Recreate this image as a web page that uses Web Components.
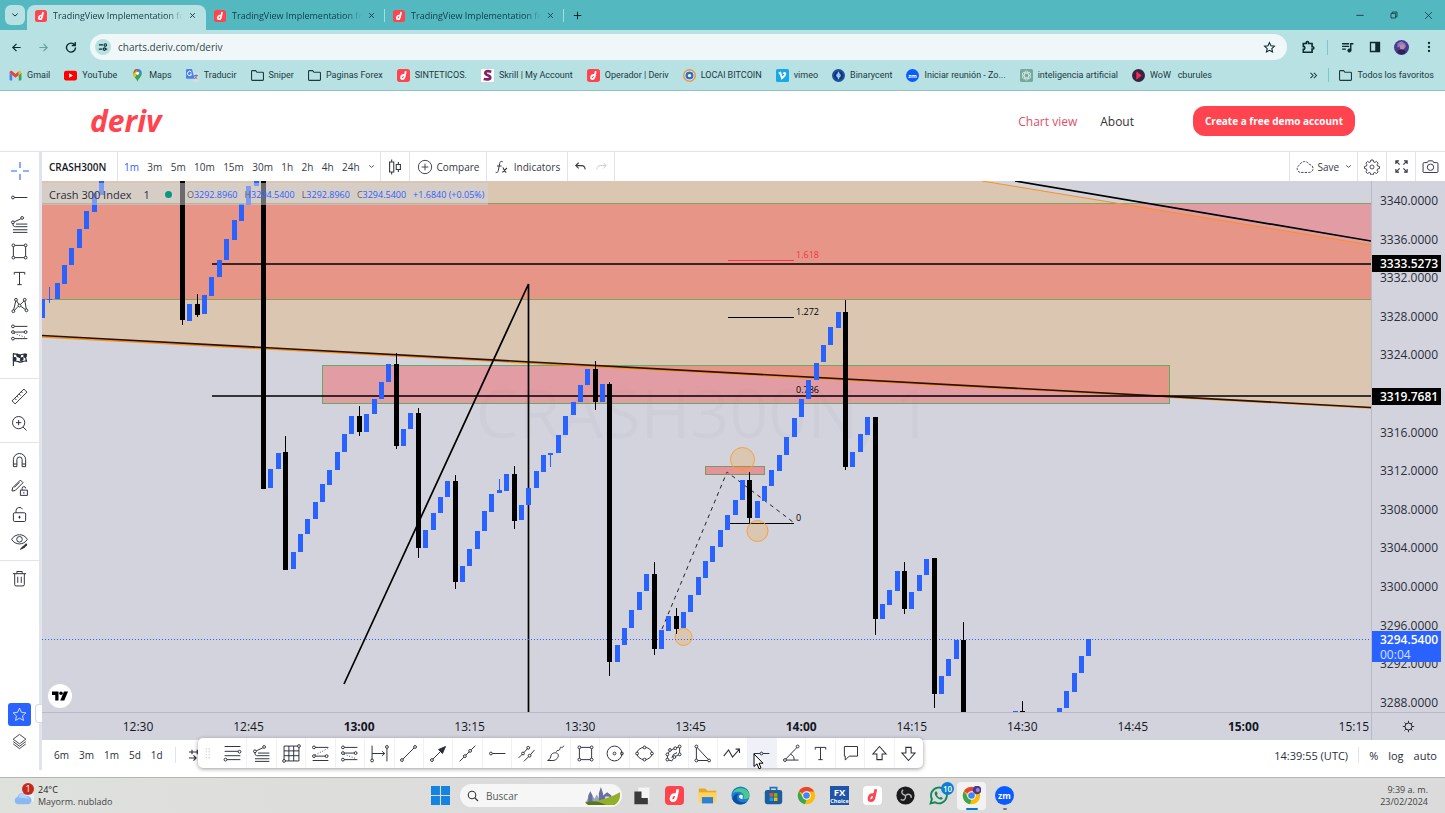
<!DOCTYPE html>
<html lang="es">
<head>
<meta charset="utf-8">
<title>TradingView Implementation for Deriv</title>
<style>
html,body{margin:0;background:#fff}
body{font-family:"Open Sans","Noto Sans",sans-serif;font-size:12px;color:#131722}
</style>
</head>
<body>
<app-window></app-window>
<script>
const define = (name, css, html, setup) => {
  const tpl = document.createElement('template');
  tpl.innerHTML = `<style>*{box-sizing:border-box}button{font:inherit;color:inherit;background:none;border:0;padding:0;margin:0;display:flex;align-items:center;justify-content:center}a{color:inherit;text-decoration:none}${css}</style>${html}`;
  customElements.define(name, class extends HTMLElement {
    constructor() {
      super();
      this.attachShadow({ mode: 'open' }).append(tpl.content.cloneNode(true));
    }
    connectedCallback() { if (setup) setup(this, this.shadowRoot); }
  });
};

/* ---------- icons: 24 x 24 grid ---------- */
const dot = (x, y) => `<circle cx="${x}" cy="${y}" r="1.6"/>`;
const deriv = (bg, fg) => `<g stroke="none"><rect width="24" height="24" rx="5" fill="${bg}"/><path fill="none" stroke="${fg}" stroke-width="3.4" d="M14 11h-2c-3 0-4 2-4.400 4.500-.3 2 .6 3 2.400 3 2.500 0 3.500-1.500 4-4L16.200 4"/></g>`;
const chrome = `<g stroke="none"><circle cx="12" cy="12" r="11" fill="#fbbc05"/><path fill="#ea4335" d="M12 12 2.500 6.500A11 11 0 0 1 21.600 7H12z"/><path fill="#34a853" d="M2.500 6.500 8 15l4 2-2 5.900A11 11 0 0 1 2.500 6.500z"/><circle cx="12" cy="12" r="5.400" fill="#fff"/><circle cx="12" cy="12" r="4.200" fill="#4285f4"/></g>`;
const zoomLogo = `<g stroke="none"><circle cx="12" cy="12" r="12" fill="#0b5cff"/><text x="12" y="16" fill="#fff" font-family="Open Sans" font-weight="700" font-size="11" text-anchor="middle">zm</text></g>`;
const ICONS = {
  cross: `<path d="M12 3v6M12 15v6M3 12h6M15 12h6"/>`,
  hray: `${dot(4.5, 12)}<path d="M6 12h15"/>`,
  fibtrend: `${dot(4.500, 9.500)}${dot(15, 4.500)}<path d="M6 9l7.500-3.500M4.500 11c0 3 1 3.500 3 3.500h13.500M4.500 18h16.500M4.500 21h16.500M8 11.500h13"/>`,
  rect: `${dot(5, 5)}${dot(19, 5)}${dot(5, 19)}${dot(19, 19)}<path d="M6.600 5h10.800M6.600 19h10.800M5 6.600v10.800M19 6.600v10.800"/>`,
  text: `<path d="M6 7.500V5h12v2.500M12 5v14M9.500 19h5"/>`,
  pattern: `${dot(5, 18.500)}${dot(8, 5.500)}${dot(12, 12)}${dot(18, 5.500)}${dot(20, 17.500)}<path d="M5.300 17l2.400-10M9 7l2.200 3.700M13.200 10.700l4-4M18.200 7l1.500 9M10.500 13l-4.200 4.400M13.600 13l5 3.600"/>`,
  forecast: `${dot(4.500, 5)}${dot(4.500, 19)}${dot(4.500, 11.500)}${dot(19, 11.500)}<path d="M6 5h15M6 11.500h11.400M6 19h15"/><path stroke-dasharray="1 2" d="M6 13l14 5"/>`,
  forecast2: `${dot(4.500, 5)}${dot(4.500, 15)}${dot(19, 15)}<path d="M6 5h15M6 15h11.400M3 20h18"/><path stroke-dasharray="1 2" d="M6 13.500l14-7"/>`,
  flag: `<path stroke-width="1.300" d="M5 4.500v15M5 6c3-2 5 2 8 1s4-2 7-1l-1 4 1 4c-3-1-5 1-7 1s-5-2-8-1z"/><path fill="currentColor" d="M9 5.500l4 1.500v3l-4-1.500zM13 10.500l3-1v3l-3 1zM17 6l2.500 0v3l-2.500 .5zM5 9.500l3 .5V13l-3 .5z"/>`,
  ruler: `<path d="M3.500 17 17 3.500 20.500 7 7 20.500zM6.500 14l2 2M9 11.500l1.500 1.500M11.500 9l2 2M14 6.500l1.500 1.500"/>`,
  zoomin: `<circle cx="11" cy="11" r="7"/><path d="M16 16l4 4M11 8v6M8 11h6"/>`,
  magnet: `<path d="M5 19v-8a7 7 0 0 1 14 0v8h-4v-8a3 3 0 0 0-6 0v8zM5 16h4M15 16h4"/>`,
  pencillock: `<path d="M3.500 16 4 12.500l9-9 3 3-9 9zM6 12l6-6"/><path d="M13 15h8v6h-8zM15 15v-2a2 2 0 0 1 4 0M17 17v2"/>`,
  lock: `<rect x="5" y="10" width="14" height="10" rx="1.500"/><path d="M8 10V7.500A4 4 0 0 1 15.500 6M12 13.500v3" /><circle cx="12" cy="15" r=".8" fill="currentColor"/>`,
  eye: `<path d="M3 9.500c4-7 14-7 18 0-4 7-14 7-18 0z"/><circle cx="12" cy="9.500" r="3.200"/><path fill="currentColor" d="M13 21l3-3.500 2 1zM17 17l2.500-2.500 1 1.500-2.500 2z"/>`,
  trash: `<path d="M4.500 6.500h15M9 6.500V4h6v2.500M6.500 6.500V19a1.500 1.500 0 0 0 1.500 1.500h8a1.500 1.500 0 0 0 1.500-1.500V6.500M10 10v7M14 10v7"/>`,
  star: `<path d="M12 3l2.700 5.900 6.300.8-4.700 4.300 1.300 6.400L12 17.200 6.400 20.400 7.700 14 3 9.700l6.300-.8z"/>`,
  layers: `<path d="M12 3l8 6-8 6-8-6zM4 12l8 6 8-6M4 15l8 6 8-6"/>`,
  candles: `<path stroke-width="1.300" d="M8 3v3M8 18v3M5.500 6h5v12h-5zM16 6v3M16 15v3M13.500 9h5v6h-5z"/>`,
  pluscircle: `<circle cx="12" cy="12" r="10" stroke-width="1.400"/><path stroke-width="1.400" d="M12 7v10M7 12h10"/>`,
  fx: `<path stroke-width="1.500" d="M13 4c-3-1-4 0-4.500 3L6.500 17c-.5 3-1.500 4-4 3M4.500 10.500h7"/><path stroke-width="1.700" d="M13 13c2 0 2 7 5.500 7M19.500 13.500l-7 6.500"/>`,
  undo: `<path stroke-width="1.800" d="M9 6L4.500 10.500 9 15M5 10.500h9c3 0 5 2 5.500 6"/>`,
  redo: `<path stroke-width="1.500" d="M15 6l4.500 4.500L15 15M19 10.500h-9c-3 0-5 2-5.500 6"/>`,
  chev: `<path stroke-width="2.800" d="M4 8l8 7 8-7"/>`,
  cloud: `<path stroke-width="1.200" stroke-dasharray="3 1.500" d="M6.500 19.500a5 5 0 0 1-.5-9.500A6.500 6.500 0 0 1 18 9.500a5 5 0 0 1-.5 10z"/>`,
  gear: `<circle cx="12" cy="12" r="3" stroke-width="1.300"/><path stroke-width="1.400" d="M10.300 1.500h3.400l.6 2.900 1.900.8 2.500-1.600 2.500 2.500-1.600 2.500.8 1.900 2.800.6v3.200l-2.800.6-.8 1.900 1.600 2.500-2.500 2.500-2.500-1.600-1.900.8-.6 2.900h-3.400l-.6-2.900-1.900-.8-2.500 1.600-2.500-2.500 1.600-2.500-.8-1.900-2.800-.6v-3.200l2.800-.6.8-1.900-1.600-2.500 2.500-2.500 2.500 1.600 1.900-.8z"/>`,
  full: `<path stroke-width="1.800" d="M3 8V3h5M3.500 3.500 9 9M16 3h5v5M20.500 3.500 15 9M3 16v5h5M3.500 20.500 9 15M21 16v5h-5M20.500 20.500 15 15"/>`,
  camera: `<path stroke-width="1.400" d="M3 6.500h4.500L9 4h6l1.500 2.500H21A1.500 1.500 0 0 1 22.500 8v11a1.500 1.500 0 0 1-1.500 1.500H3A1.500 1.500 0 0 1 1.500 19V8A1.500 1.500 0 0 1 3 6.500z"/><circle stroke-width="1.400" cx="12" cy="13" r="4.500"/>`,
  sun: `<path stroke-width="1.600" d="M12 1.500v4M12 18.500v4M1.500 12h4M18.500 12h4M4.500 4.500l2.700 2.700M16.800 16.800l2.700 2.700M4.500 19.500l2.700-2.700M16.800 7.200l2.700-2.700"/><circle stroke-width="1.800" cx="12" cy="12" r="6.500"/>`,
  goto: `<path stroke-width="1.500" d="M4 8h17M8 5v6M15 5v6M4 16h9M10 12.500l3.500 3.500-3.500 3.500M16 16h5"/>`,
  retr: `${dot(20, 10)}${dot(4, 19)}<path d="M3 4h18M3 9.500h15.500M3 14.500h18M5.600 19H21"/>`,
  gann: `${dot(20.500, 3.500)}${dot(3.500, 20.500)}<path d="M3.500 19V3.500H19M5 20.500h15.500V5M9 3.500v17M14.500 3.500v17M3.500 9h17M3.500 14.500h17"/>`,
  range: `${dot(3.500, 20)}${dot(20.500, 4.500)}<path d="M3.500 3v15.400M20.500 6v15M3.500 12h14M15 9.500l3 2.500-3 2.500"/>`,
  line: `${dot(4.500, 19.500)}${dot(19.500, 4.500)}<path d="M5.700 18.300 18.300 5.700"/>`,
  arrow: `${dot(4.500, 19.500)}<path d="M5.700 18.300 14 10"/><path fill="currentColor" d="M20 4l-3.500 8-4.500-4.500z"/>`,
  ray: `${dot(9, 15)}${dot(15, 9)}<path d="M3 21l4.800-4.800M10.200 13.800l3.600-3.600M16.200 7.800 21 3"/>`,
  parallel: `${dot(8, 12)}${dot(14, 5.500)}${dot(15.500, 14.500)}<path d="M3 17l4-4M9 11l4-4.500M9 21l5.500-5.500M16.500 13.500 21 8"/>`,
  brush: `<path d="M3 20c3-1 3-3 4-6s6-4 8-1c1 3-2 7-6 7zM13 10c1-3 3 0 4-3s1-3 2-2 2-1 2.500-2"/>`,
  circ: `<circle cx="12" cy="12" r="8.500"/>${dot(12, 12)}${dot(20.500, 12)}`,
  ellipse: `<ellipse cx="12" cy="12" rx="8.500" ry="7"/><g fill="#fff">${dot(3.500, 12)}${dot(20.500, 12)}${dot(12, 5)}${dot(12, 19)}</g>`,
  poly: `${dot(8, 8)}${dot(19, 4)}${dot(19, 13)}${dot(13, 16)}${dot(5, 19)}${dot(5, 13)}${dot(14, 6)}<path d="M6 12l1.200-2.500M9.500 7.700l3-1M15.500 5.500l2-1M19 5.600v5.800M17.500 13.700l-3 1.500M12 17.500l-2 3-3.500-1M5 14.600v2.800M10 17l2-4 4-2"/>`,
  tri: `${dot(5, 4)}${dot(5, 20)}${dot(19.500, 20)}<path d="M5 5.600v12.800M6.600 20h11.300M6 5.300l12.500 13.400"/>`,
  zigzag: `<path stroke-width="1.200" d="M2 15l5.500-7 4.500 8L20 7M15.500 7H20v4.500"/>`,
  hline: `<circle cx="12" cy="12" r="1.600"/><path d="M3 12h7.400M13.600 12H21"/>`,
  angle: `${dot(4.500, 19.500)}<path d="M5.500 18.300 18 5.300M6 19.500h14M11 13c3 1 4 3 4 6.500"/>${dot(19, 4)}`,
  callout: `<path d="M5 4h15v11h-9.500l-4.500 4.500V15H5z"/>`,
  up: `<path stroke-width="1.200" d="M12 4l7.500 8.500H15V19H9v-6.500H4.500z"/>`,
  down: `<path stroke-width="1.200" d="M12 20l7.500-8.500H15V5H9v6.500H4.500z"/>`,
  grip: `<g fill="#b2b5be" stroke="none"><circle cx="9" cy="5" r="1"/><circle cx="14" cy="5" r="1"/><circle cx="9" cy="10" r="1"/><circle cx="14" cy="10" r="1"/><circle cx="9" cy="15" r="1"/><circle cx="14" cy="15" r="1"/><circle cx="9" cy="20" r="1"/><circle cx="14" cy="20" r="1"/></g>`,
  back: `<path stroke-width="2.600" d="M21 12H4M12 4l-8 8 8 8"/>`,
  fwd: `<path stroke-width="2.600" d="M3 12h17M12 4l8 8-8 8"/>`,
  reload: `<path stroke-width="2.800" d="M19 7.500A9 9 0 1 0 21 13M20.500 2v7h-7"/>`,
  tune: `<path stroke-width="2.800" d="M2 7h10M22 17h-3M2 17h8"/><circle stroke-width="2.600" cx="17.500" cy="7" r="3"/><circle stroke-width="2.600" cx="15.500" cy="17" r="3" fill="#b7e1e3"/>`,
  bstar: `<path stroke-width="2" d="M12 3l2.700 5.900 6.300.8-4.700 4.300 1.300 6.400L12 17.200 6.400 20.400 7.700 14 3 9.700l6.300-.8z"/>`,
  puzzle: `<path stroke-width="2.800" d="M4 6h5V4.500a2 2 0 0 1 4 0V6h6v5.500h1a2 2 0 0 1 0 4h-1V21H4v-5a2.500 2.500 0 0 0 0-5z"/>`,
  music: `<path stroke-width="2.600" d="M2 5h13M2 10h13M2 15h7M18 17V5h5"/><circle cx="15.500" cy="17.500" r="3.200" fill="currentColor"/>`,
  panel: `<path stroke-width="2.600" d="M3 3h18v18H3z"/><path fill="currentColor" d="M13 3h8v18h-8z"/>`,
  dots: `<g fill="currentColor" stroke="none"><circle cx="12" cy="4" r="2.300"/><circle cx="12" cy="12" r="2.300"/><circle cx="12" cy="20" r="2.300"/></g>`,
  avatar: `<g stroke="none"><circle cx="12" cy="12" r="12" fill="#4b3a8c"/><path fill="#8d7bc4" d="M6 5l6-3 6 4 1 5-4 3-5-4-5 2z"/><circle cx="13" cy="11" r="4" fill="#b98f9e"/><path fill="#2e2259" d="M5 19c3-5 10-5 14 0-4 5-10 5-14 0z"/></g>`,
  x: `<path stroke-width="3.200" d="M4 4l16 16M20 4 4 20"/>`,
  thinx: `<path stroke-width="2" d="M3 3l18 18M21 3 3 21"/>`,
  min: `<path stroke-width="2.400" d="M1 13h22"/>`,
  restore: `<path stroke-width="2.200" d="M3 7h14v14H3zM7 7V3h14v14h-4"/>`,
  plus: `<path stroke-width="2.800" d="M12 2v20M2 12h20"/>`,
  more: `<path stroke-width="2.800" d="M4 5l7 7-7 7M13 5l7 7-7 7"/>`,
  folder: `<path stroke-width="2" d="M1 4.500c0-1 .5-1.500 1.500-1.500H8.500l2.500 3h10.500c1 0 1.500.5 1.500 1.500v12c0 1-.5 1.500-1.500 1.500h-19c-1 0-1.500-.5-1.500-1.500z"/>`,
  derivred: deriv('#ff444f', '#fff'),
  derivwhite: deriv('#fff', '#ff444f'),
  gmail: `<g stroke="none"><path fill="#4285f4" d="M1 7l5 4v10H2.500C1.500 21 1 20.500 1 19.500z"/><path fill="#34a853" d="M23 7l-5 4v10h3.500c1 0 1.500-.5 1.500-1.500z"/><path fill="#ea4335" d="M1 7c0-3 3-5 5-3l6 5 6-5v7l-6 5-6-5z"/><path fill="#fbbc04" d="M18 4c2-2 5 0 5 3l-5 4z"/></g>`,
  youtube: `<g stroke="none"><rect y="3" width="24" height="18" rx="4" fill="#f00"/><path fill="#fff" d="M9.500 8l7 4-7 4z"/></g>`,
  maps: `<g stroke="none"><path fill="#34a853" d="M12 24c-1-6-8-9-8-16a8 8 0 0 1 16 0c0 7-7 10-8 16z"/><path fill="#4285f4" d="M12 0a8 8 0 0 1 7.500 5L13 12z"/><path fill="#ea4335" d="M6 2.500A8 8 0 0 1 12 0l1 2-6 6z"/><path fill="#fbbc04" d="M4 9l7-7-2 12-3 1c-1-2-2-3-2-6z"/><circle cx="12" cy="8" r="3" fill="#fff"/></g>`,
  translate: `<g stroke="none"><path fill="#d9dde2" d="M9 7h13a1.500 1.500 0 0 1 1.500 1.500v14L22 24h-8z"/><path fill="#4c80f0" d="M1.500 0H11l5 18H1.500A1.500 1.500 0 0 1 0 16.500v-15z"/><path fill="none" stroke="#fff" stroke-width="1.800" d="M10 6a4 4 0 1 0 .5 3.500H7.500"/><path fill="none" stroke="#5f6f80" stroke-width="1.500" d="M15 12h7M18.500 10v2M20.500 12c-1 4-3 5-5 6M16 13c1 3 3 4 5 5"/></g>`,
  skrill: `<g stroke="none"><rect width="24" height="24" fill="#fff"/><path fill="none" stroke="#862165" stroke-width="5" d="M19 5c-6-1.500-11-1.500-11 2.500 0 5 9 3 9 8 0 4-6 4.500-12 3"/></g>`,
  btc: `<g stroke="none"><circle cx="12" cy="12" r="12" fill="#e39a4a"/><circle cx="12" cy="12" r="9" fill="#fff"/><circle cx="12" cy="12" r="7.500" fill="#2b6fd0"/><circle cx="12" cy="12" r="3" fill="#fff"/></g>`,
  vimeo: `<g stroke="none"><rect width="24" height="24" rx="3" fill="#17a9e8"/><path fill="none" stroke="#fff" stroke-width="3.400" d="M5 8l3-1 3 10c4-3 7-6 6-9-.5-1.500-3-1-3 1"/></g>`,
  binary: `<g stroke="none"><circle cx="12" cy="12" r="12" fill="#1d4f9c"/><circle cx="12" cy="12" r="8" fill="#0d3474"/><path fill="none" stroke="#9fd0ff" stroke-width="2.500" d="M12 5v14M9 12c0-4 6-4 6 0s-6 4-6 0"/></g>`,
  zoomLogo,
  gpt: `<g stroke="none"><rect width="24" height="24" rx="3" fill="#75a99c"/><g fill="none" stroke="#e6f3f0" stroke-width="1.300"><ellipse cx="12" cy="12" rx="4" ry="8.500"/><ellipse cx="12" cy="12" rx="4" ry="8.500" transform="rotate(60 12 12)"/><ellipse cx="12" cy="12" rx="4" ry="8.500" transform="rotate(120 12 12)"/></g></g>`,
  wow: `<g stroke="none"><circle cx="12" cy="12" r="12" fill="#3a2340"/><path fill="#f02d5a" d="M8 4l10 8-10 8z"/></g>`,
  weather: `<g stroke="none"><path fill="#e4f0fc" d="M11 19a5 5 0 0 1 0-9 6 6 0 0 1 11-1 5 5 0 0 1-1 10z"/><path fill="#8ab8f2" d="M5 22a4.500 4.500 0 0 1-.5-8.900 5.500 5.500 0 0 1 10.500-1A4.900 4.900 0 0 1 17 22z"/><path fill="#b5d3f8" d="M6 14a4.500 4.500 0 0 1 9-1 4 4 0 0 1 3 3c-3-2-8-2-12-2z"/></g>`,
  windows: `<g stroke="none" fill="#1583e0"><path d="M0 0h11.300v11.300H0zM12.700 0H24v11.300H12.700zM0 12.700h11.300V24H0zM12.700 12.700H24V24H12.700z"/></g>`,
  search: `<g stroke-width="2.200"><circle cx="10" cy="10" r="7.500"/><path d="M15.500 15.500 22 22"/></g>`,
  taskview: `<g stroke="none"><path fill="#f5f5f5" d="M8 2h14v16H8z"/><path fill="#3a3a3a" d="M3 7h9v8h8v8H3z"/></g>`,
  files: `<g stroke="none"><path fill="#e9a820" d="M1 3h8l3 3h11v6H1z"/><path fill="#ffd35c" d="M1 8h22v13H1z"/><path fill="#2d80d8" d="M5 14h14v8H5z"/></g>`,
  edge: `<g stroke="none"><circle cx="12" cy="12" r="11.500" fill="#1b7fd3"/><path fill="#48c98e" d="M2 9a11.500 11.500 0 0 1 21.500 3c0 4-4 5-8 4 3-7-5-11-13.500-7z"/><path fill="#0f4f9f" d="M8 12c-2 6 4 11 12 8-4 5-15 5-18-3 0-6 5-8 9-7-2 .5-3 1-3 2z"/><path fill="#e7f4fb" d="M10 13c0-2 5-3 5 0 0 1-1 2 0 3-3 1-5-1-5-3z"/></g>`,
  store: `<g stroke="none"><path fill="none" stroke="#2b6fb5" stroke-width="2" d="M8 6V2h8v4"/><rect x="1" y="5" width="22" height="18" rx="3" fill="#1c5d9e"/><path fill="#f25022" d="M7 9h4.500v4.500H7z"/><path fill="#7fba00" d="M12.500 9H17v4.500h-4.500z"/><path fill="#00a4ef" d="M7 14.500h4.500V19H7z"/><path fill="#ffb900" d="M12.500 14.500H17V19h-4.500z"/></g>`,
  chrome,
  chromeuser: `${chrome}<circle cx="19" cy="5" r="5.500" fill="#4b3a8c" stroke="none"/><circle cx="20" cy="5" r="2.500" fill="#9c88c9" stroke="none"/>`,
  fxchoice: `<g stroke="none"><rect width="24" height="24" fill="#1f55a8"/><text x="12" y="13" fill="#fff" font-family="Open Sans" font-weight="700" font-size="12" text-anchor="middle">FX</text><text x="12" y="21" fill="#fff" font-family="Open Sans" font-weight="700" font-size="7" text-anchor="middle">Choice</text></g>`,
  obs: `<g stroke="none"><circle cx="12" cy="12" r="11.500" fill="#1b1a1c"/><g fill="none" stroke="#b9b9b9" stroke-width="1.800"><path d="M12 12c-5-1-6-5-3-7M12 12c4-3 8-1 7 3M12 12c1 5-3 7-6 5"/></g></g>`,
  whatsapp: `<g fill="none" stroke="#12875a"><path stroke-width="2.400" d="M2 22l1.700-5.500A10 10 0 1 1 7.500 20.500z"/><path fill="#12875a" stroke="none" d="M8 7c-2 2 0 6 3 8.500s6 2 6.500 0L15 13.500l-1.500 1.300C12 14 10.500 12.500 10 11l1-1.300L9.800 7z"/></g>`
};
customElements.define('ui-icon', class extends HTMLElement {
  connectedCallback() {
    const root = this.shadowRoot || this.attachShadow({ mode: 'open' });
    const s = this.getAttribute('size') || 24;
    root.innerHTML = `<style>:host{display:inline-flex;flex:none}</style><svg aria-hidden="true" width="${s}" height="${s}" viewBox="0 0 24 24" fill="none" stroke="currentColor" stroke-width="1.1">${ICONS[this.getAttribute('name')] || ''}</svg>`;
  }
});

/* ---------- browser ---------- */
define('browser-tab', `
:host{display:flex;align-items:center;width:179px;height:25px;padding:0 5px 4px 8px;color:#0f3d44;font-size:9px;position:relative}
:host([active]){background:#b7e1e3;border-radius:8px 8px 0 0}
:host([divided])::after{content:"";position:absolute;right:0;top:4px;height:13px;width:1px;background:#a9dadd}
a{flex:1;display:flex;align-items:center;gap:6px;min-width:0}
span{flex:1;overflow:hidden;white-space:nowrap;-webkit-mask-image:linear-gradient(90deg,#000 88%,transparent);mask-image:linear-gradient(90deg,#000 88%,transparent)}
button{width:18px;height:20px}`,
`<a href="#"><ui-icon name="derivred" size="12"></ui-icon><span><slot></slot></span></a><button aria-label="Cerrar"><ui-icon name="x" size="7"></ui-icon></button>`);

define('tab-strip', `
:host{display:flex;align-items:flex-end;height:30px;background:#54b8c0;padding-left:5px;color:#0b2b30}
.list{width:20px;height:20px;border-radius:6px;background:#b7e1e3;align-self:center;margin-right:2px}
.new{width:26px;height:30px}.win{margin-left:auto;display:flex;align-self:center}
.win button{width:34px;height:30px}`,
`<button class="list" aria-label="Buscar pestañas"><ui-icon name="chev" size="8"></ui-icon></button>
<browser-tab active>TradingView Implementation for Deriv</browser-tab>
<browser-tab divided>TradingView Implementation for Deriv</browser-tab>
<browser-tab divided>TradingView Implementation for Deriv</browser-tab>
<button class="new" aria-label="Nueva pestaña"><ui-icon name="plus" size="9"></ui-icon></button>
<div class="win"><button aria-label="Minimizar"><ui-icon name="min" size="8"></ui-icon></button><button aria-label="Restaurar"><ui-icon name="restore" size="8"></ui-icon></button><button aria-label="Cerrar"><ui-icon name="thinx" size="9"></ui-icon></button></div>`);

define('address-bar', `
:host{display:flex;align-items:center;height:34px;background:#b7e1e3;padding:0 3px;color:#0b2b30}
button{width:27px;height:26px}
.dis{color:#6a9ea3}
.box{flex:1;display:flex;align-items:center;height:26px;border-radius:13px;background:#eff7f8;padding:0 4px 0 5px;margin:0 7px 0 6px}
.box button:first-child{width:16px;height:16px;border-radius:8px;background:#b7e1e3}
input{flex:1;min-width:0;border:0;background:none;font:10px "Open Sans",sans-serif;color:#33474c;padding:0 7px;height:24px}
.sep{width:1px;height:15px;background:#7cc6cc;margin:0 6px}`,
`<button aria-label="Atrás"><ui-icon name="back" size="11"></ui-icon></button><button class="dis" aria-label="Adelante"><ui-icon name="fwd" size="11"></ui-icon></button><button aria-label="Recargar"><ui-icon name="reload" size="12"></ui-icon></button>
<div class="box"><button aria-label="Información del sitio"><ui-icon name="tune" size="10"></ui-icon></button><input aria-label="Dirección" value="charts.deriv.com/deriv"><button aria-label="Añadir a favoritos"><ui-icon name="bstar" size="13"></ui-icon></button></div>
<button aria-label="Extensiones"><ui-icon name="puzzle" size="14"></ui-icon></button><span class="sep"></span><button aria-label="Multimedia"><ui-icon name="music" size="13"></ui-icon></button><button aria-label="Panel lateral"><ui-icon name="panel" size="12"></ui-icon></button><button aria-label="Perfil"><ui-icon name="avatar" size="15"></ui-icon></button><button aria-label="Menú"><ui-icon name="dots" size="12"></ui-icon></button>`);

define('bookmark-item', `:host{display:flex}a{display:flex;align-items:center;gap:5px;white-space:nowrap}`,
`<a href="#"><slot name="icon"></slot><slot></slot></a>`);
const MARKS = [['gmail','Gmail'],['youtube','YouTube'],['maps','Maps'],['translate','Traducir'],['folder','Sniper'],['folder','Paginas Forex'],['derivred','SINTETICOS.'],['skrill','Skrill | My Account'],['derivred','Operador | Deriv'],['btc','LOCAl BITCOIN'],['vimeo','vimeo'],['binary','Binarycent'],['zoomLogo','Iniciar reunión - Zo...'],['gpt','inteligencia artificial'],['wow','WoW &nbsp; cburules']];
define('bookmarks-bar', `
:host{display:flex;align-items:center;height:27px;background:#b7e1e3;border-bottom:1px solid #8fc3c7;padding:0 11px 4px 9px;font-family:Roboto,"Open Sans",sans-serif;font-size:9px;color:#1d3a3f;gap:14px}
.end{margin-left:auto;display:flex;align-items:center;gap:10px}
i{width:1px;height:14px;background:#7cc6cc}`,
`${MARKS.map(([i, t]) => `<bookmark-item><ui-icon slot="icon" name="${i}" size="13"></ui-icon>${t}</bookmark-item>`).join('')}
<div class="end"><button aria-label="Más favoritos"><ui-icon name="more" size="9"></ui-icon></button><i></i><bookmark-item><ui-icon slot="icon" name="folder" size="13"></ui-icon>Todos los favoritos</bookmark-item></div>`);

/* ---------- site header ---------- */
define('site-header', `
:host{display:flex;align-items:center;height:61px;background:#fff;border-bottom:1px solid #e0e3eb;padding:0 90px;font-size:12px}
.logo{font-weight:700;font-style:italic;font-size:30px;line-height:32px;color:#ff444f}
nav{margin-left:auto;display:flex;gap:23px;margin-right:59px;color:#333}
nav a:first-child{color:#e0506a}
button{height:30px;width:162px;border-radius:12px;background:#ff444f;color:#fff;font-weight:700;font-size:10px;white-space:nowrap}`,
`<a class="logo" href="#">deriv</a><nav><a href="#">Chart view</a><a href="#">About</a></nav><button>Create a free demo account</button>`);

/* ---------- chart toolbar ---------- */
define('chart-topbar', `
:host{display:flex;align-items:center;height:29px;background:#fff;font-size:10px;color:#363a45}
div{display:flex;align-items:center;height:29px;border-right:1px solid #e0e3eb}
.sym{width:76px;padding-left:7px;font-weight:600;color:#131722}
.int{width:263px;padding:0 5px 0 6px;justify-content:space-between}.int button:first-child{color:#2962ff}
.one{width:29px;justify-content:center}
.cmp{width:77px;justify-content:center}.ind{width:81px;justify-content:center}.cmp button,.ind button{gap:4px}
.un{width:47px;justify-content:space-evenly}.un button:last-child{color:#c4c7cf}
.end{margin-left:auto;border:0}.end .save{width:69px;border-left:1px solid #e0e3eb;justify-content:space-evenly}.save button{gap:3px}
.end .one:last-child{border:0}`,
`<div class="sym"><button>CRASH300N</button></div>
<div class="int">${['1m','3m','5m','10m','15m','30m','1h','2h','4h','24h'].map(t => `<button>${t}</button>`).join('')}<button aria-label="Intervalos"><ui-icon name="chev" size="7"></ui-icon></button></div>
<div class="one"><button aria-label="Velas"><ui-icon name="candles" size="20"></ui-icon></button></div>
<div class="cmp"><button><ui-icon name="pluscircle" size="16"></ui-icon>Compare</button></div>
<div class="ind"><button><ui-icon name="fx" size="16"></ui-icon>Indicators</button></div>
<div class="un"><button aria-label="Deshacer"><ui-icon name="undo" size="15"></ui-icon></button><button aria-label="Rehacer"><ui-icon name="redo" size="15"></ui-icon></button></div>
<div class="end"><div class="save"><button><ui-icon name="cloud" size="19"></ui-icon>Save</button><button aria-label="Opciones"><ui-icon name="chev" size="7"></ui-icon></button></div><div class="one"><button aria-label="Ajustes"><ui-icon name="gear" size="16"></ui-icon></button></div><div class="one"><button aria-label="Pantalla completa"><ui-icon name="full" size="15"></ui-icon></button></div><div class="one"><button aria-label="Captura"><ui-icon name="camera" size="17"></ui-icon></button></div></div>`);

const tool = n => `<button aria-label="${n}"><ui-icon name="${n}" size="${n === 'cross' ? 24 : 21}"></ui-icon></button>`;
define('draw-sidebar', `
:host{display:flex;flex-direction:column;width:42px;padding:5px 0 15px;border-right:3px solid #e0e3eb;color:#2a2e39;background:#fff;position:relative}
button{width:39px;height:27px}hr{width:100%;border:0;border-top:1px solid #e0e3eb;margin:5px 0 4px}
button:first-of-type{color:#2962ff}
.fav{margin:auto 0 0 8px;width:23px;height:23px;background:#2962ff;color:#fff;border-radius:3px}
.layers{margin-top:2px}
.fold{position:absolute;right:-3px;bottom:47px;width:7px;height:19px;background:#fff;border:1px solid #d6d9e2;border-right:0;border-radius:4px 0 0 4px}`,
`${['cross','hray','fibtrend','rect','text','pattern','forecast','flag'].map(tool).join('')}<hr>${['ruler','zoomin'].map(tool).join('')}<hr>${['magnet','pencillock','lock','eye'].map(tool).join('')}<hr>${tool('trash')}
<button class="fav" aria-label="Favoritos"><ui-icon name="star" size="17"></ui-icon></button><button class="layers" aria-label="Objetos"><ui-icon name="layers" size="19"></ui-icon></button><button class="fold" aria-label="Ocultar"></button>`);

/* ---------- candles: [slot, body top, body bottom, direction, wick top, wick bottom] ---------- */
const UP = 0, DN = 1;
const CANDLES = [[-19,299,318],[-18,299,300,UP,287,303],[-17,283,299],[-16,265,284],[-15,248,265],[-14,229,248],[-13,211,229],[-12,193,212],[-11,180,195],
[0,180,320,DN,180,325],[1,304,321],[2,304,315,DN,294,317],[3,295,314],[4,277,296],[5,260,277],[6,239,260],[7,220,240],[8,204,221],[9,186,205],[10,180,186],[11,180,489,DN],[12,469,488],[13,453,469],[14,452,570,DN,436,570],
[15,552,569],[16,534,552],[17,519,534],[18,502,519],[19,484,502],[20,470,485],[21,452,470],[22,434,452],[23,416,434],[24,416,432,DN,406,436],[25,414,432],[26,399,414],[27,382,399],[28,364,382],[29,364,446,DN,353,449],
[30,429,446],[31,413,429],[32,413,548,DN,408,558],[33,530,548],[34,513,530],[35,497,513],[36,481,497],[37,481,582,DN,475,589],[38,566,582],[39,549,566],[40,531,549],[41,511,531],[42,494,512],[43,490,493,UP,479,493],[44,474,491],[45,474,521,DN,466,529],
[46,505,520],[47,488,505],[48,471,488],[49,455,472],[50,453,455,UP,453,467],[51,435,453],[52,416,435],[53,402,415],[54,385,402],[55,369,385],[56,369,402,DN,361,410],[57,384,402],[58,384,662,DN,382,676],
[59,645,662],[60,628,645],[61,610,628],[62,592,610],[63,574,591],[64,574,649,DN,562,655],[65,630,649],[66,616,631],[67,616,629,DN,608,634],[68,612,628],[69,595,612],[70,577,595],[71,561,578],[72,546,562],[73,530,547],[74,515,530],[75,500,515],[76,480,500],[77,480,518,DN,472,523],
[78,501,518],[79,486,501],[80,470,486],[81,455,471],[82,437,455],[83,418,437],[84,399,417],[85,380,399],[86,363,380],[87,345,362],[88,327,345],[89,312,328],[90,312,467,DN,300,470],[91,452,467],[92,434,452],[93,417,435],[94,417,619,DN,417,635],
[95,604,619],[96,590,605],[97,571,591],[98,571,609,DN,562,614],[99,592,609],[100,575,591],[101,559,575],[102,558,694,DN,558,708],[103,676,694],[104,659,676],[105,640,659],[106,640,714,DN,622,714],[113,711,714],[114,711,714,DN,701,714],[119,708,714],[120,691,708],[121,673,692],[122,656,673],[123,639,656]];
const candleSvg = CANDLES.map(([i, t, b, d, wt, wb]) => {
  const cx = Math.round(180 + 7.368 * i), fill = d ? '#000' : '#2962ff';
  return `<rect x="${cx}" y="${t}" width="5" height="${b - t}" fill="${fill}"/>` + (wt ? `<rect x="${cx + 2}" y="${wt}" width="1" height="${wb - wt}" fill="${fill}"/>` : '');
}).join('');

define('chart-legend', `
:host{display:flex;align-items:center;height:22px;background:rgba(211,211,222,.5);padding:0 4px 0 7px;white-space:nowrap;color:#2a2e39;font-size:11px}
h1{font-size:11px;font-weight:400;margin:0 12px 0 0}.dot{width:7px;height:7px;border-radius:50%;background:#089981;margin:0 15px}
p{margin:0;font-size:9px;color:#2962ff;display:flex;gap:7px}b{font-weight:400;color:#5d606b}`,
`<h1>Crash 300 Index</h1><span>1</span><span class="dot"></span><p><span><b>O</b>3292.8960</span><span><b>H</b>3294.5400</span><span><b>L</b>3292.8960</span><span><b>C</b>3294.5400</span><span>+1.6840 (+0.05%)</span></p>`);

define('price-chart', `
:host{display:block;position:relative;background:#d3d3de;overflow:hidden;min-height:300px}
svg{position:absolute;inset:0;width:100%;height:100%}
chart-legend{position:absolute;left:0;top:2px}
.tv{position:absolute;left:6px;bottom:4px;width:24px;height:24px;border-radius:50%;background:#fff;display:flex;align-items:center;justify-content:center}
.tv svg{position:static;width:16px;height:10px}`,
`<svg viewBox="42 181 1329 531" preserveAspectRatio="xMinYMin slice" role="img" aria-label="CRASH300N">
<g fill="#000" fill-opacity=".02" text-anchor="middle" font-family="Open Sans, sans-serif"><text x="704" y="438" font-size="68">CRASH300N, 1</text><text x="704" y="502" font-size="34">Crash 300 Index</text></g>
<path d="M42 181H982L1371 245V408L42 336.500z" fill="#ff9800" fill-opacity=".2"/>
<rect x="42" y="204" width="1329" height="95" fill="#ff3a38" fill-opacity=".35"/>
<path d="M42 203.500H1371M42 299.500H1371" stroke="#6b9a4a" stroke-opacity=".8"/>
<rect x="322.500" y="365.500" width="847" height="38" fill="#ff3a38" fill-opacity=".35" stroke="#5fae62"/>
<path d="M42 337 1371 408" stroke="#f7931a" stroke-width="1.500"/><path d="M982 181 1371 245" stroke="#f7931a"/>
<path d="M42 335.500 1371 407.500" stroke="#2a0f05" stroke-width="1.600"/>
<path d="M1015 181 1371 241M212 264H1371M212 396H1371M344 684 528.500 284V713" stroke="#000" stroke-width="1.700" fill="none"/>
<path d="M728 260.500H794" stroke="#f23645"/><path d="M728 317.500H794M729 523.500H794" stroke="#000"/>
<path d="M662 629 727 472 793 522" stroke="#222" fill="none" stroke-dasharray="4 4"/>
<rect x="705.500" y="466.500" width="59" height="8" fill="#ff3338" fill-opacity=".4" stroke="#7d9a5c"/>
<g fill="#ff9800" fill-opacity=".2" stroke="#f7a23c"><circle cx="742.500" cy="459.500" r="12"/><circle cx="757.500" cy="531" r="10.500"/><circle cx="683.500" cy="637" r="8.500"/></g>
<g font-family="Open Sans, sans-serif" font-size="9"><text x="796" y="258" fill="#f23645">1.618</text><text x="796" y="315">1.272</text><text x="796" y="393">0.786</text><text x="796" y="521">0</text></g>
<path d="M42 639.500H1371" stroke="#2962ff" stroke-dasharray="1 2" shape-rendering="crispEdges"/>
${candleSvg}</svg>
<chart-legend></chart-legend>
<a class="tv" href="#" aria-label="TradingView"><svg viewBox="0 0 32 20"><path d="M0 1h13v18H6.500V8H0zM24 1h8l-7.500 18h-8z"/><circle cx="18" cy="4.500" r="3.500"/></svg></a>`);

const price = p => p === 3320 ? '<span></span>' : `<span>${p}.0000</span>`;
define('price-axis', `
:host{display:flex;flex-direction:column;justify-content:space-between;width:74px;padding:13px 0 2px 8px;background:#d3d3de;border-left:1px solid #b9bac6;position:relative;color:#2a2e39;line-height:14px}
span{height:14px}
b{position:absolute;left:0;width:69px;padding-left:8px;background:#000;color:#fff;font-weight:600;line-height:17px;font-size:12px}
.a{top:74px}.b{top:207px}.c{top:450px;background:#2962ff;line-height:15px;padding-top:1px}small{display:block;font-size:12px;font-weight:400;color:#d4e0ff}`,
`${Array.from({ length: 14 }, (_, i) => price(3340 - 4 * i)).join('')}<b class="a">3333.5273</b><b class="b">3319.7681</b><b class="c">3294.5400<small>00:04</small></b>`);

define('time-axis', `
:host{display:flex;height:28px;background:#d3d3de;border-top:1px solid #b9bac6}
div{flex:1;display:flex;justify-content:space-between;align-items:center;padding-left:79px}
span{width:34px;text-align:center}.h{font-weight:700}
button{width:74px;border-left:1px solid #b9bac6}`,
`<div>${['12:30','12:45','13:00','13:15','13:30','13:45','14:00','14:15','14:30','14:45','15:00','15:15'].map(t => `<span${t.endsWith(':00') ? ' class="h"' : ''}>${t}</span>`).join('')}</div><button aria-label="Ajustes de escala"><ui-icon name="sun" size="13"></ui-icon></button>`);

define('range-bar', `
:host{display:flex;align-items:center;height:30px;padding:0 8px 0 12px;font-size:11px;color:#2a2e39;background:#fff}
.l,.r{display:flex;align-items:center;gap:10px}.l{font-size:10px}.r{margin-left:auto}
i{width:1px;height:16px;background:#e0e3eb}.l i{margin:0 0 0 2px}`,
`<div class="l"><button>6m</button><button>3m</button><button>1m</button><button>5d</button><button>1d</button><i></i><button aria-label="Ir a"><ui-icon name="goto" size="18"></ui-icon></button></div>
<div class="r"><button>14:39:55 (UTC)</button><i></i><button>%</button><button>log</button><button>auto</button></div>`);

define('favorites-bar', `
:host{display:flex;height:30px;background:#fff;border-radius:5px;box-shadow:0 1px 4px rgba(0,0,0,.4);color:#2a2e39}
.grip{width:20px}.t{flex:1;border-right:1px solid #f0f1f5}.t:last-child{border:0}.on{background:#f0f1f8}`,
`<button class="grip" aria-label="Mover"><ui-icon name="grip" size="14"></ui-icon></button>${['retr','fibtrend','gann','forecast2','forecast','range','line','arrow','ray','hray','parallel','brush','rect','circ','ellipse','poly','tri','zigzag','hline','angle','text','callout','up','down'].map(n => `<button class="t${n === 'hline' ? ' on' : ''}" aria-label="${n}"><ui-icon name="${n}" size="21"></ui-icon></button>`).join('')}`);

define('chart-workspace', `
:host{display:flex;flex:1;position:relative}
main{flex:1;min-width:0;display:flex;flex-direction:column}
.plot{flex:1;display:flex}price-chart{flex:1}
favorites-bar{position:absolute;left:198px;bottom:2px;width:725px}
.cursor{position:absolute;left:753px;bottom:0;width:11px;height:17px}`,
`<draw-sidebar></draw-sidebar><main><chart-topbar></chart-topbar><div class="plot"><price-chart></price-chart><price-axis></price-axis></div><time-axis></time-axis><range-bar></range-bar></main>
<favorites-bar></favorites-bar>
<svg class="cursor" viewBox="0 0 11 17"><path d="M1 1v12.500l3-2.700 2 5 2-.9-2-4.700h4z" fill="#fff" stroke="#000"/></svg>`);

/* ---------- taskbar ---------- */
define('task-item', `:host{display:flex;position:relative;width:33px;height:28px}
button{flex:1;border-radius:4px}:host([active]) button{background:#f2f2f2;margin:0 2px}
:host([active])::after,:host([running])::after{content:"";position:absolute;bottom:0;left:50%;width:12px;margin-left:-6px;height:2px;border-radius:1px;background:#0078d4}
:host([running])::after{width:4px;margin-left:-2px;background:#777}
::slotted(b){position:absolute;top:0;right:1px;width:13px;height:13px;border-radius:50%;background:#0d7fd0;color:#fff;font:600 8px/13px "Open Sans",sans-serif;text-align:center}`,
`<button><slot></slot></button>`, el => el.shadowRoot.querySelector('button').setAttribute('aria-label', el.getAttribute('label')));
const app = (n, extra = '', badge = '') => `<task-item label="${n}" ${extra}><ui-icon name="${n}" size="19"></ui-icon>${badge}</task-item>`;
define('task-bar', `
:host{display:grid;grid-template-columns:1fr auto 1fr;align-items:center;height:36px;background:linear-gradient(90deg,#dfe1dd,#dbdbdb 40%);border-top:1px solid #b5b5b5;color:#444;font-size:9px;line-height:12px}
.w{display:flex;align-items:center;gap:4px;padding-left:14px;position:relative;justify-self:start}
.w b{position:absolute;left:22px;top:-1px;width:12px;height:12px;border-radius:50%;background:#c42b1c;color:#fff;font-weight:400;text-align:center}
.w strong{font-weight:400;color:#222;display:block}
.c{display:flex;align-items:center}
label{display:flex;align-items:center;width:162px;height:23px;border-radius:12px;background:#f5f6f5;padding:0 0 0 7px;gap:7px;margin:0 3px;overflow:hidden;color:#333}
input{flex:1;min-width:0;border:0;background:none;font:10px "Open Sans",sans-serif;padding:0}input::placeholder{color:#5a5a5a;opacity:1}
.scene{width:36px;height:20px;margin-right:1px}
.t{text-align:right;padding-right:17px}`,
`<div class="w"><ui-icon name="weather" size="20"></ui-icon><b>1</b><div><strong>24°C</strong>Mayorm. nublado</div></div>
<div class="c">${app('windows')}<label><ui-icon name="search" size="12"></ui-icon><input aria-label="Buscar" placeholder="Buscar"><svg class="scene" viewBox="0 0 34 19" aria-hidden="true"><path fill="#9ba2c4" d="M1 15l4-8 4 5 2-4 4 7z"/><path fill="#6a6f9c" d="M3 15V9l2-4 2 4v6zM13 15V7l2-6 2 6v8zM17 15v-6l4-3 4 3v6z"/><path fill="#dfe1ef" d="M19 10h4v5h-4z"/><path fill="#93b02b" d="M0 15c12 0 22-3 33-9 1 5-1 10-5 12H3z"/><path fill="#54752a" d="M0 16c6-3 14-1 20 2H3z"/></svg></label>
${app('taskview')}${app('derivred')}${app('files')}${app('edge')}${app('store')}${app('chrome')}${app('fxchoice')}${app('derivwhite')}${app('obs')}${app('whatsapp', '', '<b>10</b>')}${app('chromeuser', 'active')}${app('zoomLogo', 'running')}</div>
<div class="t">9:39 a. m.<br>23/02/2024</div>`);

define('app-window', `:host{display:flex;flex-direction:column;min-height:100vh}task-bar{margin-top:7px}`,
`<tab-strip></tab-strip><address-bar></address-bar><bookmarks-bar></bookmarks-bar><site-header></site-header><chart-workspace></chart-workspace><task-bar></task-bar>`);
</script>
</body>
</html>
